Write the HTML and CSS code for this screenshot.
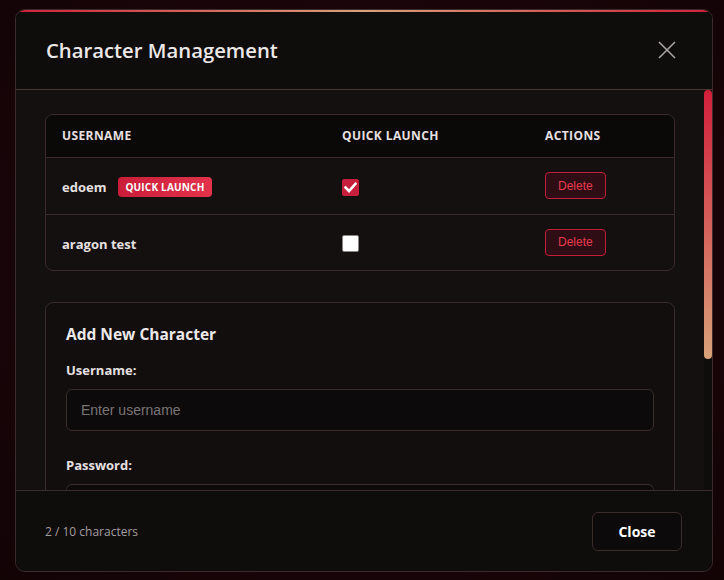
FILE: index.html
```html
<!DOCTYPE html>
<html lang="en">
<head>
<meta charset="utf-8">
<title>Character Management</title>
<link rel="stylesheet" href="styles.css">
</head>
<body>
<div class="modal">
  <div class="modal-header">
    <h2 class="modal-title">Character Management</h2>
    <button class="icon-close" aria-label="Close">
      <svg width="18" height="18" viewBox="0 0 18 18"><path d="M1 1 L17 17 M17 1 L1 17" stroke="#a8a4a4" stroke-width="1.6" fill="none"/></svg>
    </button>
  </div>
  <div class="modal-body">
    <div class="body-content">
      <div class="table-wrap">
        <table class="char-table">
          <thead>
            <tr><th class="c1">Username</th><th class="c2">Quick Launch</th><th class="c3">Actions</th></tr>
          </thead>
          <tbody>
            <tr>
              <td><span class="uname">edoem</span><span class="badge">Quick Launch</span></td>
              <td><span class="check checked"><svg width="13" height="11" viewBox="0 0 13 11"><path d="M1.5 5.5 L5 9 L11.5 1.8" stroke="#fff" stroke-width="2.6" fill="none" stroke-linecap="square"/></svg></span></td>
              <td><button class="btn-delete">Delete</button></td>
            </tr>
            <tr>
              <td><span class="uname">aragon test</span></td>
              <td><span class="check"></span></td>
              <td><button class="btn-delete">Delete</button></td>
            </tr>
          </tbody>
        </table>
      </div>

      <div class="card">
        <h3 class="card-title">Add New Character</h3>
        <div class="form-group">
          <label class="label">Username:</label>
          <input class="input" type="text" placeholder="Enter username">
        </div>
        <div class="form-group">
          <label class="label">Password:</label>
          <input class="input" type="password">
        </div>
      </div>
    </div>
    <div class="scrollbar"><div class="scroll-thumb"></div></div>
  </div>
  <div class="modal-footer">
    <span class="count">2 / 10 characters</span>
    <button class="btn-close">Close</button>
  </div>
</div>
</body>
</html>
```
FILE: styles.css
```css
* { box-sizing: border-box; }
html, body { height: 100%; }
body {
  margin: 0;
  padding: 9px 11px 0 15px;
  background: radial-gradient(ellipse at 50% 45%, #2a0a10 0%, #1a0509 55%, #120305 100%);
  font-family: "Open Sans", "Noto Sans", sans-serif;
  color: #e8e2e2;
  overflow: hidden;
}
.modal {
  position: relative;
  height: 563px;
  display: flex;
  flex-direction: column;
  background: #130f0f;
  border: 1px solid #3a2c2b;
  border-radius: 10px;
  overflow: hidden;
}
.modal::before {
  content: "";
  position: absolute;
  top: -1px; left: 0; right: 0;
  height: 3px;
  background: linear-gradient(90deg, #d21f3b 0%, #d8a27a 50%, #d21f3b 100%);
}
.modal-header {
  height: 80px;
  flex: none;
  display: flex;
  align-items: center;
  justify-content: space-between;
  padding: 1px 30px 0 30px;
  background: #0f0c0c;
  border-bottom: 1px solid #4a382f;
}
.modal-title {
  margin: 0;
  font-size: 20.3px;
  font-weight: 600;
  color: #ece8e8;
}
.icon-close {
  width: 30px; height: 30px;
  padding: 0;
  border: none;
  background: transparent;
  display: flex; align-items: center; justify-content: center;
}
.modal-body {
  flex: 1;
  min-height: 0;
  display: flex;
  background: #141010;
}
.body-content {
  flex: 1;
  min-width: 0;
  overflow: hidden;
  padding: 24px 29px 0 29px;
}
.scrollbar {
  width: 8px;
  flex: none;
  background: #0f0c0c;
}
.scroll-thumb {
  height: 269px;
  border-radius: 4px;
  background: linear-gradient(180deg, #d21f3b 0%, #d8a27a 100%);
}
.table-wrap {
  border: 1px solid #3a2b2a;
  border-radius: 8px;
  overflow: hidden;
}
.char-table {
  width: 100%;
  border-collapse: collapse;
}
.char-table th {
  height: 42px;
  padding: 0 16px;
  text-align: left;
  font-size: 12px;
  font-weight: 700;
  text-transform: uppercase;
  letter-spacing: 0.4px;
  color: #e6e0e0;
  background: #0b0808;
  border-bottom: 1px solid #3a2b2a;
}
.char-table .c1 { width: 280px; }
.char-table .c2 { width: 203px; }
.char-table td {
  height: 57px;
  padding: 0 16px;
  vertical-align: middle;
  border-bottom: 1px solid #3a2b2a;
}
.char-table tbody tr:last-child td { border-bottom: none; height: 56px; }
.uname {
  font-size: 13px;
  font-weight: 700;
  color: #e6e0e0;
  vertical-align: middle;
}
.badge {
  display: inline-flex;
  align-items: center;
  height: 20px;
  margin-left: 12px;
  padding: 0 7px;
  border-radius: 4px;
  background: linear-gradient(90deg, #c91d3a, #e2334a);
  color: #fff;
  font-size: 10px;
  font-weight: 700;
  text-transform: uppercase;
  letter-spacing: 0.2px;
  vertical-align: middle;
}
.check {
  display: inline-flex;
  align-items: center;
  justify-content: center;
  width: 17px; height: 17px;
  border-radius: 2px;
  background: #ffffff;
  border: 1px solid #8a8585;
  vertical-align: middle;
}
.check.checked {
  background: #c8203c;
  border-color: #c8203c;
}
.btn-delete {
  height: 27px;
  padding: 0 12px;
  background: #2e0d14;
  border: 1px solid #c01f38;
  border-radius: 4px;
  color: #ea3a50;
  font-family: "Liberation Sans", Arial, sans-serif;
  font-size: 12px;
  vertical-align: middle;
}
.card {
  margin-top: 31px;
  border: 1px solid #3a2c2b;
  border-radius: 8px;
  padding: 21px 20px 20px;
  background: #120e0e;
}
.card-title {
  margin: 0 0 17px;
  font-size: 15.5px;
  font-weight: 700;
  color: #ece8e8;
  line-height: 20px;
}
.form-group { margin-bottom: 25px; }
.label {
  display: block;
  margin-bottom: 10px;
  font-size: 13px;
  font-weight: 700;
  line-height: 18px;
  color: #e6e0e0;
}
.input {
  display: block;
  width: 100%;
  height: 42px;
  padding: 0 14px;
  background: #0c0a0b;
  border: 1px solid #3a2c2b;
  border-radius: 6px;
  color: #e6e0e0;
  font-family: "Liberation Sans", Arial, sans-serif;
  font-size: 14px;
  outline: none;
}
.input::placeholder { color: #7a7575; }
.modal-footer {
  height: 81px;
  flex: none;
  display: flex;
  align-items: center;
  justify-content: space-between;
  padding: 0 30px 0 29px;
  background: #0f0c0c;
  border-top: 1px solid #3a2c2b;
}
.count {
  font-size: 12px;
  color: #a59d9d;
}
.btn-close {
  width: 90px;
  height: 39px;
  background: #0c0a0a;
  border: 1px solid #3a2c2b;
  border-radius: 6px;
  color: #ffffff;
  font-family: "Open Sans", sans-serif;
  font-weight: 700;
  font-size: 14px;
}
```
